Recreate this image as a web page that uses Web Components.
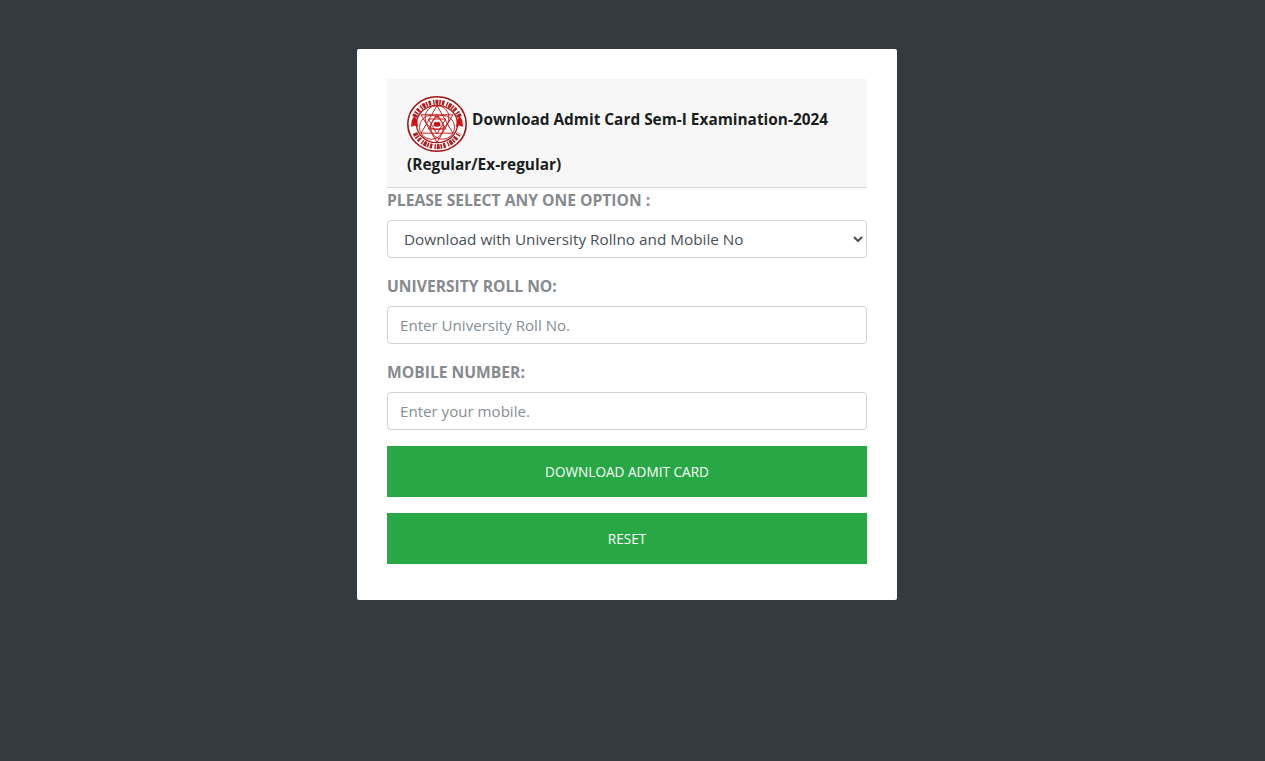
<!DOCTYPE html>
<html lang="en">
<head>
<meta charset="utf-8">
<title>Download Admit Card</title>
<style>
  html, body { margin: 0; height: 100%; }
  body { width: 1254px; background: #343a40; font-family: "Open Sans", "Noto Sans", sans-serif; }
</style>
</head>
<body>
<admit-card>
  <card-title slot="header">Download Admit Card Sem-I Examination-2024 (Regular/Ex-regular)</card-title>
  <form-field label="PLEASE SELECT ANY ONE OPTION :" type="select" value="Download with University Rollno and Mobile No"></form-field>
  <form-field label="UNIVERSITY ROLL NO:" placeholder="Enter University Roll No."></form-field>
  <form-field label="MOBILE NUMBER:" placeholder="Enter your mobile."></form-field>
  <action-button>DOWNLOAD ADMIT CARD</action-button>
  <action-button>RESET</action-button>
</admit-card>

<script>
const FONT = '"Open Sans", "Noto Sans", sans-serif';

class AdmitCard extends HTMLElement {
  constructor() {
    super();
    this.attachShadow({ mode: 'open' });
  }

  connectedCallback() {
    this.shadowRoot.innerHTML = `
      <style>
        :host {
          display: block;
          box-sizing: border-box;
          width: 540px;
          margin: 49px auto 0;
          padding: 30px 30px 20px;
          background: #fff;
          border-radius: 2px;
        }
      </style>
      <slot name="header"></slot>
      <slot></slot>
    `;
  }
}

class CollegeLogo extends HTMLElement {
  constructor() {
    super();
    this.attachShadow({ mode: 'open' });
  }

  connectedCallback() {
    const star = (r, rot) => {
      const pts = [];
      for (let i = 0; i < 3; i++) {
        const a = (rot + i * 120) * Math.PI / 180;
        pts.push((30 + r * Math.sin(a)).toFixed(1) + ',' + (28 - r * Math.cos(a)).toFixed(1));
      }
      return `<polygon points="${pts.join(' ')}"/>`;
    };
    // three overlapping rings give the looped lines around the star
    const loops = [90, 210, 330].map(deg => {
      const a = deg * Math.PI / 180;
      return `<circle cx="${(30 + 6.5 * Math.cos(a)).toFixed(1)}" cy="${(28 - 6.5 * Math.sin(a)).toFixed(1)}" r="12"/>`;
    }).join('');
    this.shadowRoot.innerHTML = `
      <style>
        :host { display: inline-block; width: 60px; height: 56px; vertical-align: middle; margin: 7px 1px 0 0; }
        svg { display: block; }
      </style>
      <svg width="60" height="56" viewBox="0 0 60 56" role="img" aria-label="University seal">
        <ellipse cx="30" cy="28" rx="29.2" ry="27.2" fill="#fff" stroke="#a01212" stroke-width="1.6"/>
        <g fill="none" stroke="#b02020" stroke-width="5" stroke-dasharray="3 .8 1.6 1.2 2.4 2.2 1.4 .9">
          <path d="M7.5 21A24 22.8 0 0 1 52.5 21"/>
          <path d="M8 37A24 22.8 0 0 0 52 37"/>
        </g>
        <ellipse cx="30" cy="28" rx="20.5" ry="18.6" fill="#fff" stroke="#a81414" stroke-width="1.3"/>
        <g fill="none" stroke="#c42020" stroke-width="1">
          ${star(18.4, 0)}${star(18.4, 180)}
          ${loops}
          ${star(10, 0)}${star(10, 180)}
        </g>
        <path d="M26.5 29.5c0-3.6 2.6-4.6 3.5-2.8 .9-1.8 3.5-.8 3.5 2.8-1.8 1.8-5.2 1.8-7 0z" fill="#c81010"/>
        <path d="M7.5 20l2.5 4 1 7-3.5-1.5L4 31l.8-7z" fill="#d40f0f"/>
        <path d="M52.5 20l-2.5 4-1 7 3.5-1.5L56 31l-.8-7z" fill="#d40f0f"/>
      </svg>
    `;
  }
}

class CardTitle extends HTMLElement {
  constructor() {
    super();
    this.attachShadow({ mode: 'open' });
  }

  connectedCallback() {
    this.shadowRoot.innerHTML = `
      <style>
        :host {
          display: block;
          padding: 10px 20px 9px;
          background: #f7f7f7;
          border-bottom: 1px solid #d9d9d9;
          font: 700 15.4px/26px ${FONT};
          color: #1b1e21;
        }
      </style>
      <college-logo></college-logo>
      <slot></slot>
    `;
  }
}

class FormField extends HTMLElement {
  constructor() {
    super();
    this.attachShadow({ mode: 'open' });
  }

  connectedCallback() {
    const label = this.getAttribute('label') || '';
    const control = this.getAttribute('type') === 'select'
      ? `<select><option>${this.getAttribute('value')}</option></select>`
      : `<input type="text" placeholder="${this.getAttribute('placeholder') || ''}">`;

    this.shadowRoot.innerHTML = `
      <style>
        :host { display: block; margin-bottom: 16px; font-family: ${FONT}; }
        label {
          display: block;
          margin-bottom: 8px;
          font-weight: 700;
          font-size: 15.65px;
          line-height: 24px;
          color: #868a8e;
        }
        select, input {
          display: block;
          box-sizing: border-box;
          width: 100%;
          height: 38px;
          padding: 6px 12px;
          background: #fff;
          border: 1px solid #ced4da;
          border-radius: 4px;
          font: 400 15.3px/24px ${FONT};
          color: #495057;
          outline: none;
        }
        input { font-size: 15.1px; }
        input::placeholder { color: #868e96; opacity: 1; }
      </style>
      <label>${label}</label>
      ${control}
    `;
  }
}

class ActionButton extends HTMLElement {
  constructor() {
    super();
    this.attachShadow({ mode: 'open' });
  }

  connectedCallback() {
    this.shadowRoot.innerHTML = `
      <style>
        :host { display: block; margin-bottom: 16px; }
        button {
          display: block;
          width: 100%;
          height: 51px;
          padding: 0;
          border: 0;
          background: #28a745;
          color: #fff;
          font: 400 13.6px/21px ${FONT};
        }
      </style>
      <button type="button"><slot></slot></button>
    `;
  }
}

customElements.define('admit-card', AdmitCard);
customElements.define('college-logo', CollegeLogo);
customElements.define('card-title', CardTitle);
customElements.define('form-field', FormField);
customElements.define('action-button', ActionButton);
</script>
</body>
</html>
